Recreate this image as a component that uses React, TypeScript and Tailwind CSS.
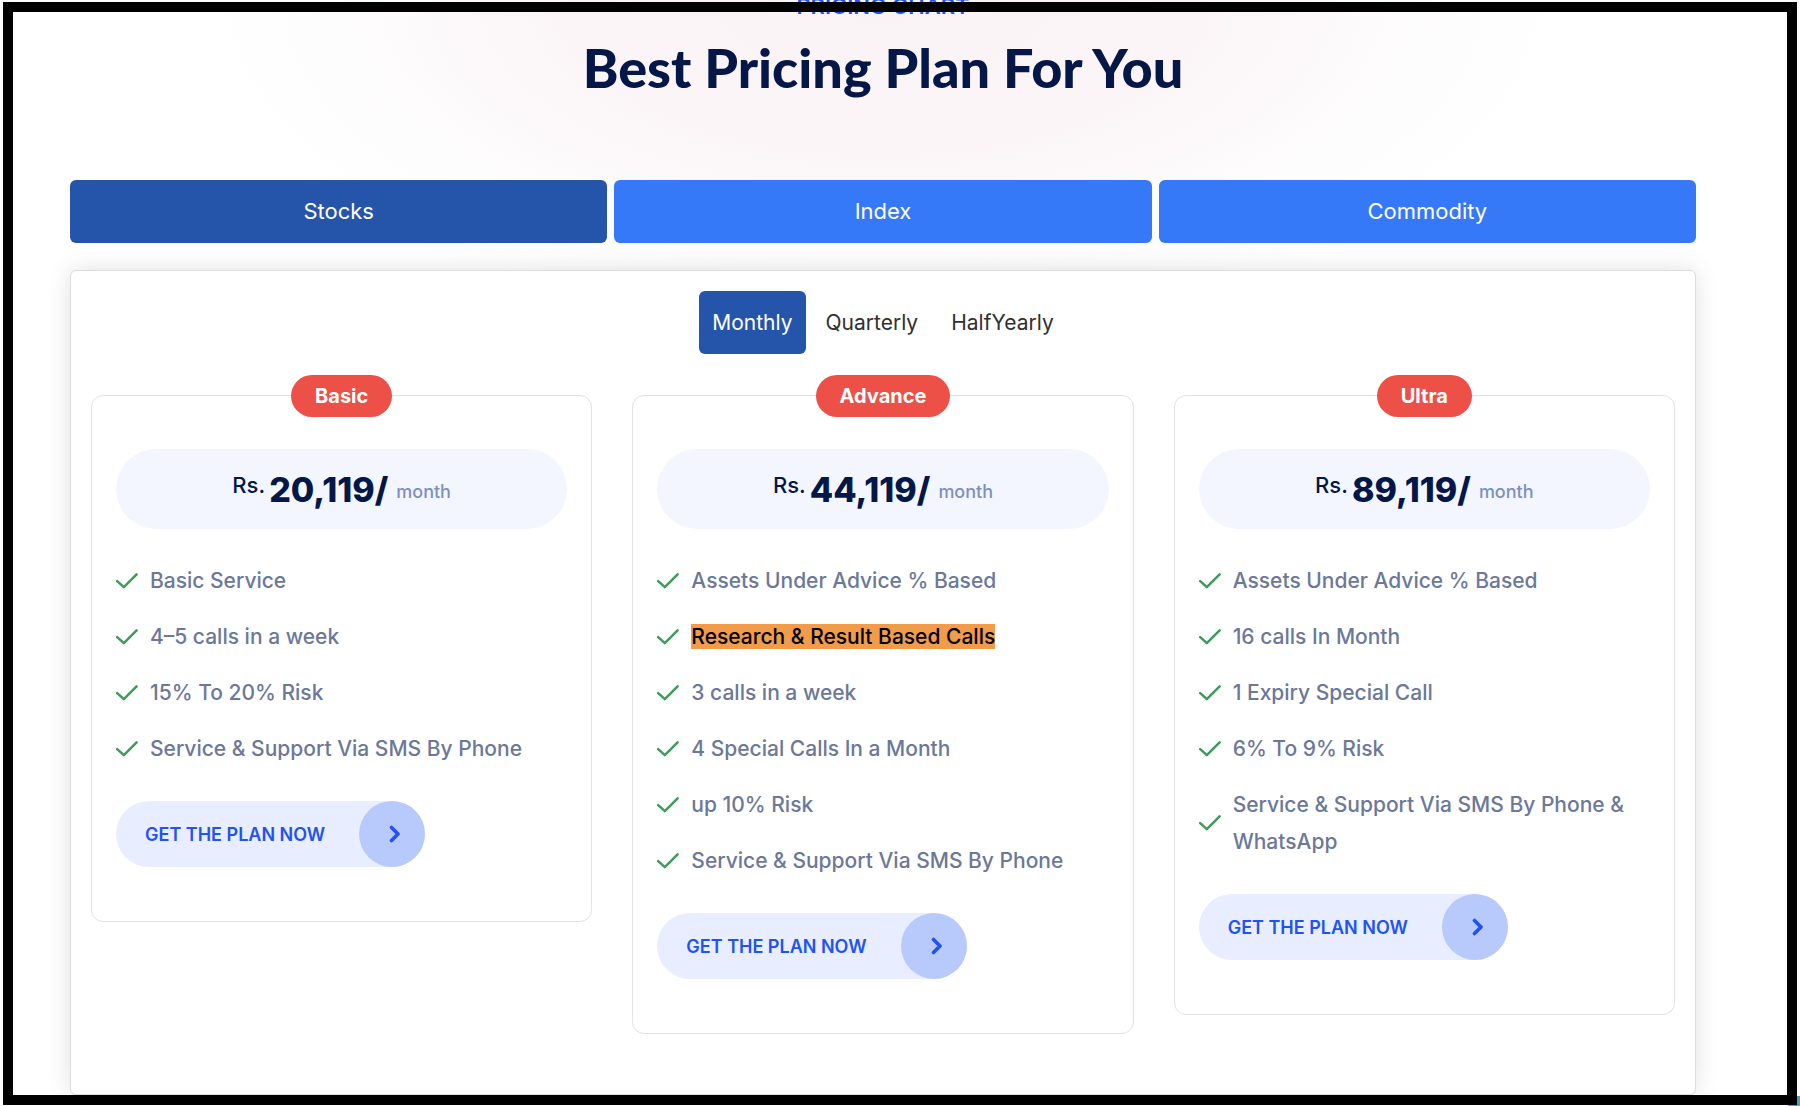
import { useState } from "react";

type Plan = {
  name: string;
  price: string;
  features: { text: string; marked?: boolean }[];
};

const markets = ["Stocks", "Index", "Commodity"];
const periods = ["Monthly", "Quarterly", "HalfYearly"];

const plans: Plan[] = [
  {
    name: "Basic",
    price: "20,119/",
    features: [
      { text: "Basic Service" },
      { text: "4–5 calls in a week" },
      { text: "15% To 20% Risk" },
      { text: "Service & Support Via SMS By Phone" },
    ],
  },
  {
    name: "Advance",
    price: "44,119/",
    features: [
      { text: "Assets Under Advice % Based" },
      { text: "Research & Result Based Calls", marked: true },
      { text: "3 calls in a week" },
      { text: "4 Special Calls In a Month" },
      { text: "up 10% Risk" },
      { text: "Service & Support Via SMS By Phone" },
    ],
  },
  {
    name: "Ultra",
    price: "89,119/",
    features: [
      { text: "Assets Under Advice % Based" },
      { text: "16 calls In Month" },
      { text: "1 Expiry Special Call" },
      { text: "6% To 9% Risk" },
      { text: "Service & Support Via SMS By Phone & WhatsApp" },
    ],
  },
];

function CheckIcon() {
  return (
    <svg width="22" height="16" viewBox="0 0 22 16" fill="none" className="shrink-0" aria-hidden="true">
      <path d="M1.2 8.2L7.8 14.2L20.6 1.4" stroke="#3f9a5b" strokeWidth="2.5" strokeLinecap="round" strokeLinejoin="round" />
    </svg>
  );
}

function PlanCard({ plan }: { plan: Plan }) {
  return (
    <article className="flex flex-col rounded-xl border border-[#e1e2e8] px-6 pb-[54px]">
      <h3 className="-mt-[21px] self-center rounded-full bg-[#ec5046] px-6 text-[20px] font-bold leading-[42px] text-white">
        {plan.name}
      </h3>

      <div className="mt-8 flex h-20 items-center justify-center rounded-full bg-[#f3f6fe] text-[#051747]">
        <span className="pb-2 text-[22px] font-medium">Rs.</span>
        <span className="ml-1 text-[34px] font-extrabold">{plan.price}</span>
        <span className="ml-2 pt-1 text-[18px] font-medium text-[#7d90bd]">month</span>
      </div>

      <ul className="mt-[33px] flex flex-col gap-[19px]">
        {plan.features.map((feature) => (
          <li key={feature.text} className="flex items-center gap-3 text-[21px] font-medium leading-[37px] text-[#6b7899]">
            <CheckIcon />
            <span>
              {feature.marked ? <mark className="bg-[#f19b4b] text-black">{feature.text}</mark> : feature.text}
            </span>
          </li>
        ))}
      </ul>

      <a
        href="#plan"
        className="mt-[34px] flex h-[66px] items-center self-start rounded-full bg-[#e8eeff] pl-[29px] text-[18px] font-semibold text-[#2152f5]"
      >
        GET THE PLAN NOW
        <span className="ml-[34px] flex size-[66px] items-center justify-center rounded-full bg-[#b8cafb] pl-1.5">
          <svg width="12" height="18" viewBox="0 0 12 18" fill="none" aria-hidden="true">
            <path d="M2.5 2.5L9 9L2.5 15.5" stroke="currentColor" strokeWidth="3.6" strokeLinecap="round" strokeLinejoin="round" />
          </svg>
        </span>
      </a>
    </article>
  );
}

export default function App() {
  const [market, setMarket] = useState("Stocks");
  const [period, setPeriod] = useState("Monthly");

  return (
    <main className="relative min-h-screen overflow-hidden bg-white bg-[radial-gradient(ellipse_700px_330px_at_883px_0px,#f9f3f6_0%,#fbf5f7_45%,#fefdfd_80%,#ffffff_100%)] pb-[11px] font-[Inter,sans-serif]">
      <section className="pl-[70px] pr-[104px]">
        <header className="flex flex-col items-center">
          <p className="-mt-[9px] text-[22px] font-semibold leading-[30px] text-[#2152f5]">PRICING CHART</p>
          <h2 className="mt-[13px] font-[Lato] text-[54px] font-black leading-[68px] text-[#051747]">Best Pricing Plan For You</h2>
        </header>

        {/* MARKET */}
        <div className="mt-[78px] grid grid-cols-3 gap-[7px]">
          {markets.map((item) => (
            <button
              key={item}
              type="button"
              onClick={() => setMarket(item)}
              className={`h-[63px] rounded-md text-[22px] text-white ${item === market ? "bg-[#2455ab]" : "bg-[#3579f8]"}`}
            >
              {item}
            </button>
          ))}
        </div>

        {/* PLANS */}
        <div className="mt-[27px] rounded-md border border-[#dcdcde] bg-white px-5 pb-[60px] pt-5 shadow-[0_0_24px_rgba(0,0,0,0.12)]">
          <div className="flex justify-center gap-[7px]">
            {periods.map((item) => (
              <button
                key={item}
                type="button"
                onClick={() => setPeriod(item)}
                className={`h-[63px] rounded-md px-[13px] text-[21px] ${item === period ? "bg-[#2455ab] text-white" : "text-[#303030]"}`}
              >
                {item}
              </button>
            ))}
          </div>

          <div className="mt-[41px] grid grid-cols-3 items-start gap-10">
            {plans.map((plan) => (
              <PlanCard key={plan.name} plan={plan} />
            ))}
          </div>
        </div>
      </section>

      {/* frame over the page, with the chat bubble peeking out of the corner */}
      <span className="absolute bottom-0 right-0 h-2.5 w-3 rounded-tl-full bg-[#4aa3ad]" />
      <div className="pointer-events-none absolute bottom-px left-[3px] right-[3px] top-0.5 border-10 border-black" />
    </main>
  );
}
